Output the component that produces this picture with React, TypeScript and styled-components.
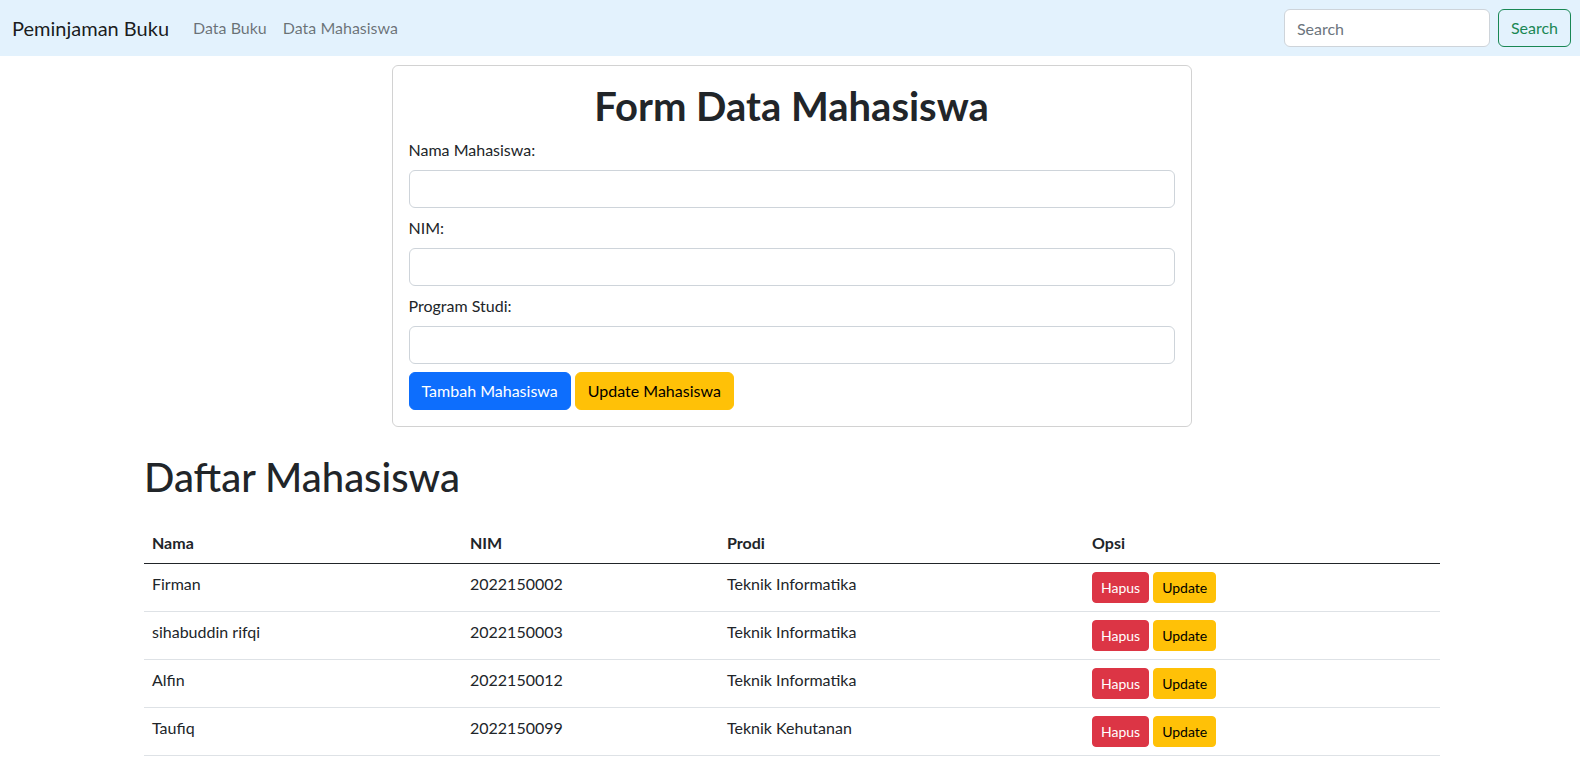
import React from "react";
import styled, { createGlobalStyle } from "styled-components";

const Global = createGlobalStyle`
  * { box-sizing: border-box; }
  body {
    margin: 0;
    font-family: "Lato", "Noto Sans", sans-serif;
    font-size: 16px;
    line-height: 1.5;
    color: #212529;
    background: #fff;
  }
`;

const Navbar = styled.nav`
  height: 56px;
  background: #e3f2fd;
  display: flex;
  align-items: center;
  padding: 8px 9px 8px 12px;
`;

const Brand = styled.a`
  font-size: 20px;
  line-height: 30px;
  padding: 5px 0;
  margin-right: 16px;
  color: rgba(0, 0, 0, 0.9);
  text-decoration: none;
`;

const NavLinks = styled.div`
  display: flex;
  flex: 1;
`;

const NavLink = styled.a`
  padding: 8px;
  color: rgba(0, 0, 0, 0.55);
  text-decoration: none;
`;

const SearchForm = styled.form`
  display: flex;
  gap: 8px;
`;

const Input = styled.input<{ $w?: string }>`
  display: block;
  width: ${(p) => p.$w ?? "100%"};
  height: 38px;
  padding: 6px 12px;
  font: inherit;
  color: #212529;
  background: #fff;
  border: 1px solid #ced4da;
  border-radius: 6px;
  outline: none;
  &::placeholder { color: #6c757d; }
`;

const Button = styled.button<{ $bg: string; $fg: string; $border?: string; $sm?: boolean }>`
  font-family: inherit;
  font-size: ${(p) => (p.$sm ? "14px" : "16px")};
  line-height: ${(p) => (p.$sm ? "21px" : "24px")};
  padding: ${(p) => (p.$sm ? "4px 8px" : "6px 12px")};
  border-radius: ${(p) => (p.$sm ? "4px" : "6px")};
  background: ${(p) => p.$bg};
  color: ${(p) => p.$fg};
  border: 1px solid ${(p) => p.$border ?? p.$bg};
  cursor: pointer;
  white-space: nowrap;
`;

const CardWrap = styled.div`
  display: flex;
  justify-content: center;
  padding-left: 3px;
  margin-top: 9px;
`;

const Card = styled.div`
  width: 800px;
  border: 1px solid rgba(0, 0, 0, 0.175);
  border-radius: 6px;
  padding: 16px;
`;

const FormTitle = styled.h1`
  margin: 0 0 8px;
  font-size: 40px;
  line-height: 48px;
  font-weight: 700;
  text-align: center;
`;

const Group = styled.div`
  margin-bottom: 8px;
`;

const Label = styled.label`
  display: block;
  margin-bottom: 8px;
`;

const ButtonRow = styled.div`
  display: flex;
  gap: 4px;
`;

const Section = styled.section`
  width: 1296px;
  margin-left: calc(50% - 646px);
`;

const ListTitle = styled.h1`
  margin: 26px 0 22px;
  font-size: 40px;
  line-height: 48px;
  font-weight: 500;
`;

const Table = styled.table`
  width: 100%;
  border-collapse: collapse;
  table-layout: fixed;
`;

const Col = styled.col<{ $w: number }>`
  width: ${(p) => p.$w}px;
`;

const Th = styled.th`
  text-align: left;
  font-weight: 700;
  padding: 8px;
  border-bottom: 1px solid #212529;
`;

const Td = styled.td`
  padding: 8px;
  border-bottom: 1px solid #dee2e6;
  vertical-align: top;
`;

const Actions = styled.div`
  display: flex;
  gap: 4px;
`;

const rows = [
  { nama: "Firman", nim: "2022150002", prodi: "Teknik Informatika" },
  { nama: "sihabuddin rifqi", nim: "2022150003", prodi: "Teknik Informatika" },
  { nama: "Alfin", nim: "2022150012", prodi: "Teknik Informatika" },
  { nama: "Taufiq", nim: "2022150099", prodi: "Teknik Kehutanan" },
];

export default function App() {
  return (
    <>
      <Global />
      <Navbar>
        <Brand href="#">Peminjaman Buku</Brand>
        <NavLinks>
          <NavLink href="#">Data Buku</NavLink>
          <NavLink href="#">Data Mahasiswa</NavLink>
        </NavLinks>
        <SearchForm onSubmit={(e) => e.preventDefault()}>
          <Input $w="206px" placeholder="Search" />
          <Button type="submit" $bg="transparent" $fg="#198754" $border="#198754">
            Search
          </Button>
        </SearchForm>
      </Navbar>

      <CardWrap>
        <Card>
          <FormTitle>Form Data Mahasiswa</FormTitle>
          <Group>
            <Label>Nama Mahasiswa:</Label>
            <Input />
          </Group>
          <Group>
            <Label>NIM:</Label>
            <Input />
          </Group>
          <Group>
            <Label>Program Studi:</Label>
            <Input />
          </Group>
          <ButtonRow>
            <Button $bg="#0d6efd" $fg="#fff">Tambah Mahasiswa</Button>
            <Button $bg="#ffc107" $fg="#000">Update Mahasiswa</Button>
          </ButtonRow>
        </Card>
      </CardWrap>

      <Section>
        <ListTitle>Daftar Mahasiswa</ListTitle>
        <Table>
          <colgroup>
            <Col $w={318} />
            <Col $w={257} />
            <Col $w={365} />
            <Col $w={356} />
          </colgroup>
          <thead>
            <tr>
              <Th>Nama</Th>
              <Th>NIM</Th>
              <Th>Prodi</Th>
              <Th>Opsi</Th>
            </tr>
          </thead>
          <tbody>
            {rows.map((r) => (
              <tr key={r.nim}>
                <Td>{r.nama}</Td>
                <Td>{r.nim}</Td>
                <Td>{r.prodi}</Td>
                <Td>
                  <Actions>
                    <Button $sm $bg="#dc3545" $fg="#fff">Hapus</Button>
                    <Button $sm $bg="#ffc107" $fg="#000">Update</Button>
                  </Actions>
                </Td>
              </tr>
            ))}
          </tbody>
        </Table>
      </Section>
    </>
  );
}
